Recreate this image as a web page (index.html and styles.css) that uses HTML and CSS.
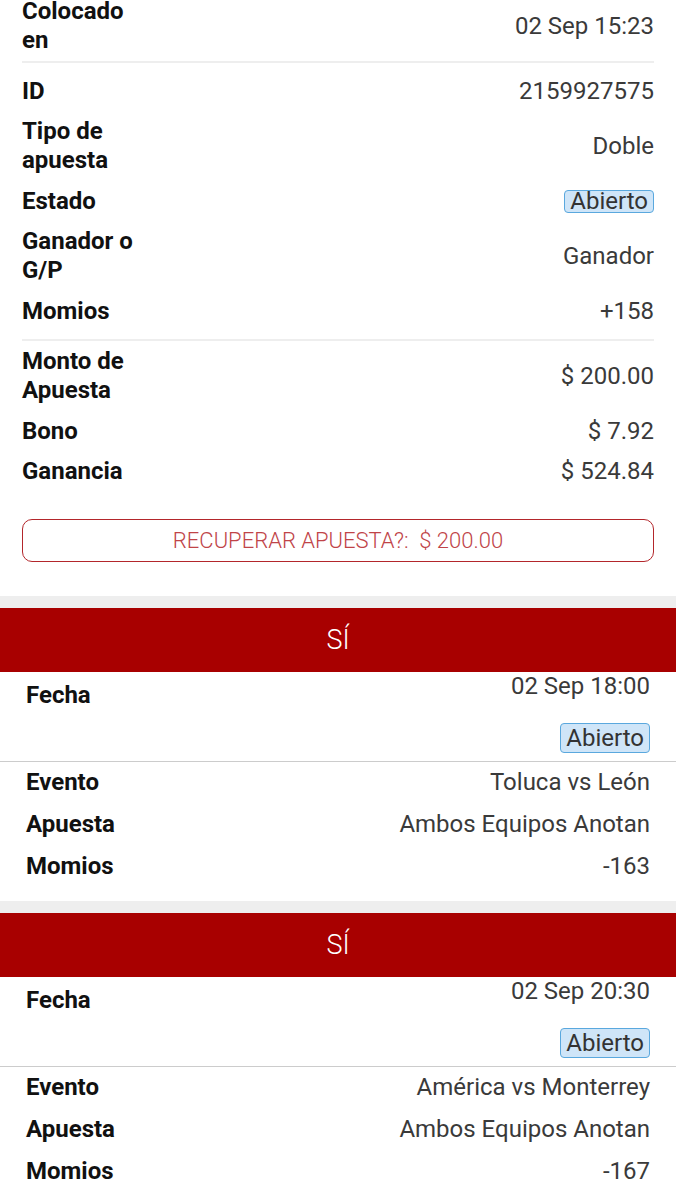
FILE: index.html
```html
<!DOCTYPE html>
<html lang="es">
<head>
  <meta charset="UTF-8" />
  <meta name="viewport" content="width=device-width, initial-scale=1.0"/>
  <title>Detalle de apuesta</title>
  <link rel="stylesheet" href="styles.css">
</head>
<body>
  <div class="summary">
    <div class="group group-first">
      <div class="row">
        <span class="label">Colocado<br>en</span>
        <span class="value">02 Sep 15:23</span>
      </div>
    </div>

    <div class="group">
      <div class="row">
        <span class="label">ID</span>
        <span class="value">2159927575</span>
      </div>
      <div class="row">
        <span class="label">Tipo de<br>apuesta</span>
        <span class="value">Doble</span>
      </div>
      <div class="row">
        <span class="label">Estado</span>
        <span class="badge">Abierto</span>
      </div>
      <div class="row">
        <span class="label">Ganador o<br>G/P</span>
        <span class="value">Ganador</span>
      </div>
      <div class="row">
        <span class="label">Momios</span>
        <span class="value">+158</span>
      </div>
    </div>

    <div class="group group-last">
      <div class="row">
        <span class="label">Monto de<br>Apuesta</span>
        <span class="value">$ 200.00</span>
      </div>
      <div class="row">
        <span class="label">Bono</span>
        <span class="value">$ 7.92</span>
      </div>
      <div class="row">
        <span class="label">Ganancia</span>
        <span class="value">$ 524.84</span>
      </div>
    </div>

    <button class="cashout">RECUPERAR APUESTA?:&nbsp; $ 200.00</button>
  </div>

  <div class="leg">
    <div class="leg-head">SÍ</div>
    <div class="leg-body">
      <div class="leg-top">
        <span class="label">Fecha</span>
        <div class="leg-when">
          <span class="value">02 Sep 18:00</span>
          <span class="badge badge-lg">Abierto</span>
        </div>
      </div>
      <div class="leg-rows">
        <div class="row">
          <span class="label">Evento</span>
          <span class="value">Toluca vs León</span>
        </div>
        <div class="row">
          <span class="label">Apuesta</span>
          <span class="value">Ambos Equipos Anotan</span>
        </div>
        <div class="row">
          <span class="label">Momios</span>
          <span class="value">-163</span>
        </div>
      </div>
    </div>
  </div>

  <div class="leg">
    <div class="leg-head">SÍ</div>
    <div class="leg-body">
      <div class="leg-top">
        <span class="label">Fecha</span>
        <div class="leg-when">
          <span class="value">02 Sep 20:30</span>
          <span class="badge badge-lg">Abierto</span>
        </div>
      </div>
      <div class="leg-rows">
        <div class="row">
          <span class="label">Evento</span>
          <span class="value">América vs Monterrey</span>
        </div>
        <div class="row">
          <span class="label">Apuesta</span>
          <span class="value">Ambos Equipos Anotan</span>
        </div>
        <div class="row">
          <span class="label">Momios</span>
          <span class="value">-167</span>
        </div>
      </div>
    </div>
  </div>
</body>
</html>
```

FILE: styles.css
```css
body {
  margin: 0;
  background-color: #eeeeee;
  font-family: Roboto, 'Liberation Sans', sans-serif;
  font-size: 24px;
  line-height: 29px;
  color: #3a3a3a;
}
.summary {
  background: #fff;
  padding: 0 22px 34px;
  margin-top: -9px;
  margin-bottom: 12px;
}
.group {
  padding: 8px 0;
  border-bottom: 2px solid #eeeeee;
}
.group-first {
  padding-top: 0;
  padding-bottom: 0;
}
.group-last {
  padding: 0;
  border-bottom: none;
}
.row {
  display: flex;
  justify-content: space-between;
  align-items: center;
  padding: 6px 0 5.5px;
}
.label {
  font-weight: bold;
  color: #111;
}
.value {
  color: #3a3a3a;
  text-align: right;
}
.badge {
  display: inline-block;
  padding: 0 5px;
  line-height: 21px;
  background: #cfe5f8;
  border: 1px solid #5aa8de;
  border-radius: 4px;
  color: #333;
}
.badge-lg {
  line-height: 28px;
}
.cashout {
  display: block;
  width: 100%;
  height: 43px;
  margin-top: 27px;
  background: #fff;
  border: 1px solid #b3262b;
  border-radius: 10px;
  font-family: Roboto, 'Liberation Sans', sans-serif;
  font-size: 22px;
  font-weight: 300;
  color: #c04448;
}
.leg {
  background: #fff;
  margin-bottom: 12px;
}
.leg-head {
  background: #a80000;
  color: #fff;
  height: 64px;
  line-height: 64px;
  text-align: center;
  font-size: 27px;
  font-weight: 300;
}
.leg-body {
  padding-bottom: 13px;
}
.leg-top {
  display: flex;
  justify-content: space-between;
  align-items: flex-start;
  padding: 0 26px 8px;
  border-bottom: 1px solid #cccccc;
}
.leg-top .label {
  margin-top: 9px;
}
.leg-when {
  display: flex;
  flex-direction: column;
  align-items: flex-end;
  gap: 22px;
}
.leg-rows {
  padding: 0 26px;
}
.leg-rows .row {
  padding: 6px 0 7px;
}
```
